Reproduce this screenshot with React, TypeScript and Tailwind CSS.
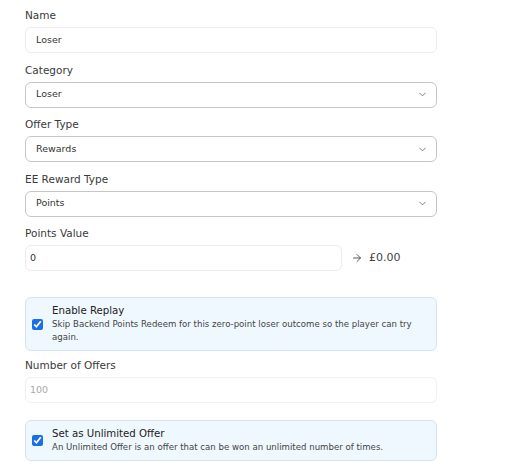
import { ChevronDown, ArrowRight } from 'lucide-react';

const font = { fontFamily: '"DejaVu Sans", "Noto Sans", sans-serif' };

function Label({ children }: { children: React.ReactNode }) {
  return <label className="block text-[10.5px] leading-4 text-[#3a3a3a] mb-1">{children}</label>;
}

function TextBox({ value }: { value: string }) {
  return (
    <div className="h-[26px] w-full rounded-md bg-white border border-[#ececec] px-[10px] flex items-center text-[9.5px] text-[#333]">
      {value}
    </div>
  );
}

function SelectBox({ value }: { value: string }) {
  return (
    <div className="h-[26px] w-full rounded-md bg-white border border-[#c6c6c6] pl-[10px] pr-[8px] flex items-center justify-between text-[9.5px] text-[#333]">
      <span>{value}</span>
      <ChevronDown size={11} strokeWidth={1.6} className="text-[#555]" />
    </div>
  );
}

function CheckCard({ title, desc }: { title: string; desc: string }) {
  return (
    <div className="w-full rounded-md bg-[#eff8fe] border border-[#d5e3ec] flex items-center pl-[6px] pr-4 py-[6px]">
      <input type="checkbox" checked readOnly className="w-[11px] h-[11px] m-0 shrink-0 accent-[#1a6fe8]" />
      <div className="ml-[9px]">
        <p className="text-[10.2px] leading-[14px] text-[#222]">{title}</p>
        <p className="text-[8.6px] leading-[13px] text-[#444]">{desc}</p>
      </div>
    </div>
  );
}

export default function App() {
  return (
    <div className="w-[518px] h-[472px] bg-white overflow-hidden" style={font}>
      <div className="w-[412px] ml-[25px] pt-[7px] flex flex-col">
        <div>
          <Label>Name</Label>
          <TextBox value="Loser" />
        </div>
        <div className="mt-[8.5px]">
          <Label>Category</Label>
          <SelectBox value="Loser" />
        </div>
        <div className="mt-[8.5px]">
          <Label>Offer Type</Label>
          <SelectBox value="Rewards" />
        </div>
        <div className="mt-[8.5px]">
          <Label>EE Reward Type</Label>
          <SelectBox value="Points" />
        </div>
        <div className="mt-[8.5px]">
          <Label>Points Value</Label>
          <div className="flex items-center">
            <div className="h-[26px] w-[317px] rounded-md bg-white border border-[#ececec] px-[4px] flex items-center text-[9.5px] text-[#333]">
              0
            </div>
            <ArrowRight size={12} strokeWidth={1.8} className="ml-[9px] text-[#444]" />
            <span className="ml-[6px] text-[11px] text-[#444]">£0.00</span>
          </div>
        </div>

        <div className="mt-[26px]">
          <CheckCard
            title="Enable Replay"
            desc="Skip Backend Points Redeem for this zero-point loser outcome so the player can try again."
          />
        </div>

        <div className="mt-[6px]">
          <Label>Number of Offers</Label>
          <div className="h-[26px] w-full rounded-md bg-white border border-[#f0f0f0] px-[4px] flex items-center text-[9.5px] text-[#a8a8a8]">
            100
          </div>
        </div>

        <div className="mt-[17px]">
          <CheckCard
            title="Set as Unlimited Offer"
            desc="An Unlimited Offer is an offer that can be won an unlimited number of times."
          />
        </div>
      </div>
    </div>
  );
}
